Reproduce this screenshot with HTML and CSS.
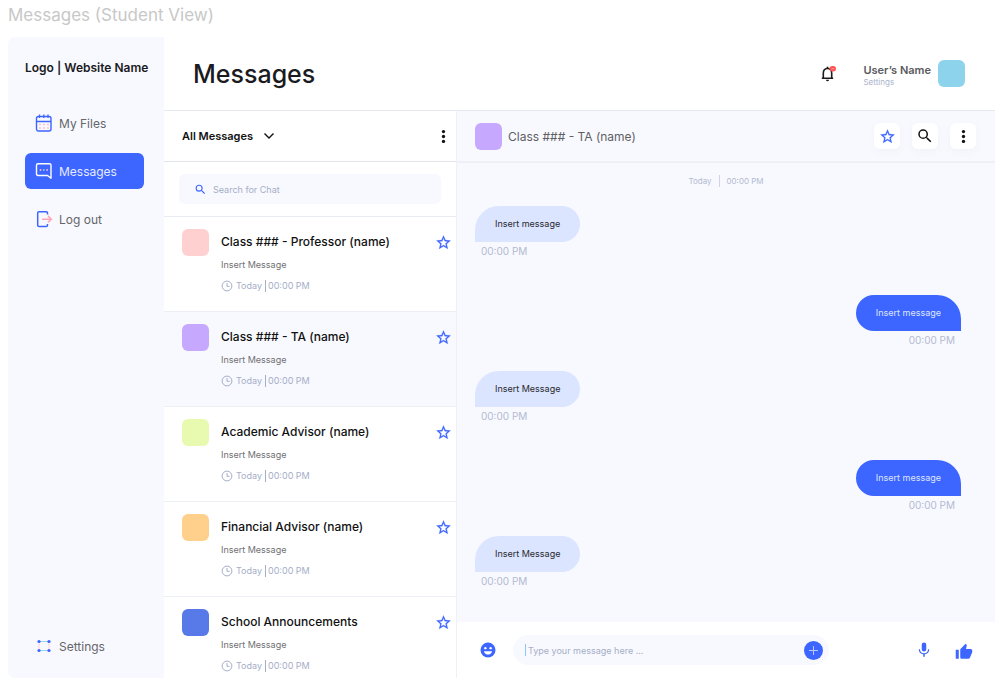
FILE: index.html
```html
<!DOCTYPE html>
<html lang="en">
<head>
<meta charset="utf-8">
<meta name="viewport" content="width=device-width, initial-scale=1">
<title>Messages (Student View)</title>
<link rel="stylesheet" href="styles.css">
</head>
<body>
<svg class="sprite" aria-hidden="true">
  <symbol id="star" viewBox="0 0 24 24"><path d="M22 9.24l-7.19-.62L12 2 9.19 8.63 2 9.24l5.46 4.73L5.82 21 12 17.27 18.18 21l-1.63-7.03L22 9.24zM12 15.4l-3.76 2.27 1-4.28-3.32-2.88 4.38-.38L12 6.1l1.71 4.04 4.38.38-3.32 2.88 1 4.28L12 15.4z" stroke="currentColor" stroke-width=".3"/></symbol>
  <symbol id="search" viewBox="0 0 24 24"><path d="M15.5 14h-.79l-.28-.27A6.47 6.47 0 0 0 16 9.5 6.5 6.5 0 1 0 9.5 16c1.61 0 3.09-.59 4.23-1.57l.27.28v.79l5 4.99L20.49 19l-4.99-5zm-6 0a4.5 4.5 0 1 1 0-9 4.5 4.5 0 0 1 0 9z"/></symbol>
  <symbol id="more" viewBox="0 0 24 24"><circle cx="12" cy="5" r="2.300"/><circle cx="12" cy="12" r="2.300"/><circle cx="12" cy="19" r="2.300"/></symbol>
  <symbol id="clock" viewBox="0 0 12 12"><g fill="none" stroke="currentColor"><circle cx="6" cy="6" r="4.9"/><path d="M6 3v3.3h2.6"/></g></symbol>
</svg>
<h2 class="caption">Messages (Student View)</h2>
<div class="app">
  <aside class="sidebar">
    <div class="logo">Logo | Website Name</div>
    <nav class="nav">
      <a class="nav-link" href="#files">
        <svg class="nav-icon" viewBox="0 0 18 18"><g fill="none"><rect x="1.500" y="2.500" width="14.500" height="14.500" rx="2" stroke="#3d65ff" stroke-width="1.400"/><path d="M1.500 7.500h14.500M4.500 .5v3.500M8.800 .5v3.500M13 .5v3.500" stroke="#3d65ff" stroke-width="1.300"/><path d="M4.200 10.500h10M4.200 14h10" stroke="#ffb3be" stroke-width="1.500" stroke-dasharray="1.500 2.500"/></g></svg>
        My Files
      </a>
      <a class="nav-link nav-link-active" href="#messages" aria-current="page">
        <svg class="nav-icon" viewBox="0 0 18 18"><path d="M3 1.800h11.500q1.500 0 1.500 1.500v13l-3.500-2.800H3q-1.500 0-1.500-1.500V3.300Q1.500 1.800 3 1.800z" fill="none" stroke="#fff" stroke-width="1.400" stroke-linejoin="round"/><circle cx="5.500" cy="8" r=".9" fill="#ffb3d4"/><circle cx="8.800" cy="8" r=".9" fill="#86ccff"/><circle cx="12.100" cy="8" r=".9" fill="#ffb3d4"/></svg>
        Messages
      </a>
      <a class="nav-link" href="#logout">
        <svg class="nav-icon" viewBox="0 0 18 18"><g fill="none"><path d="M12.500 4.500V3q0-1.300-1.300-1.300H4Q2.700 1.700 2.700 3v12.300q0 1.300 1.300 1.300h7.200q1.300 0 1.300-1.300V14" stroke="#3d65ff" stroke-width="1.500"/><path d="M7 9.200h9M13 5.900l3.300 3.300-3.300 3.300" stroke="#ffa6b5" stroke-width="1.500"/></g></svg>
        Log out
      </a>
      <a class="nav-link nav-link-last" href="#settings">
        <svg class="nav-icon" viewBox="0 0 18 18"><path d="M4 4.500h10M4 13.500h10" stroke="#9cd6f5"/><path d="M4 4.500v9M14 4.500v9" stroke="#ffd0d6"/><g fill="#3d65ff"><circle cx="4" cy="4.500" r="1.600"/><circle cx="14" cy="4.500" r="1.600"/><circle cx="4" cy="13.500" r="1.600"/><circle cx="14" cy="13.500" r="1.600"/></g></svg>
        Settings
      </a>
    </nav>
  </aside>
  <div class="main">
    <header class="topbar">
      <h1 class="title">Messages</h1>
      <button class="icon-button bell" type="button" aria-label="Notifications">
        <svg width="18" height="18" viewBox="0 0 18 18"><path d="M4.300 13V8.200Q4.300 4 8.500 3.300 12.700 4 12.700 8.200V13M2.800 13.300h11.400M8.500 1.800v2" fill="none" stroke="#1b1b1f" stroke-width="1.600"/><path d="M7 14.700h3q0 1.500-1.500 1.500T7 14.700z" fill="#1b1b1f"/><rect x="10.500" y="1" width="6.500" height="5.500" rx="2.700" fill="#ff5555"/><path d="M12.500 3.700h2.500" stroke="#ff9a9a"/></svg>
      </button>
      <div class="user">
        <div class="user-text"><strong class="user-name">User’s Name</strong><a class="user-settings" href="#settings">Settings</a></div>
        <div class="avatar sky"></div>
      </div>
    </header>
    <div class="columns">
      <section class="list">
        <div class="list-head">
          <button class="filter" type="button">All Messages
            <svg width="12" height="12" viewBox="0 0 12 12"><path d="M1.500 3.500L6 8l4.500-4.500" fill="none" stroke="#111" stroke-width="1.400"/></svg>
          </button>
          <button class="icon-button" type="button" aria-label="More"><svg width="17" height="17"><use href="#more"/></svg></button>
        </div>
        <div class="search-row">
          <label class="search"><svg class="blue" width="13" height="13"><use href="#search"/></svg><input class="field" type="search" placeholder="Search for Chat" aria-label="Search for Chat"></label>
        </div>
        <ul class="threads">
          <li class="thread">
            <div class="avatar pink"></div>
            <div class="thread-body"><h3 class="thread-name">Class ### - Professor (name)</h3><p class="thread-text">Insert Message</p><p class="thread-time"><svg width="12" height="12"><use href="#clock"/></svg><span>Today</span><span class="after-rule">00:00 PM</span></p></div>
            <button class="icon-button blue" type="button" aria-label="Star"><svg width="17" height="17"><use href="#star"/></svg></button>
          </li>
          <li class="thread thread-active">
            <div class="avatar purple"></div>
            <div class="thread-body"><h3 class="thread-name">Class ### - TA (name)</h3><p class="thread-text">Insert Message</p><p class="thread-time"><svg width="12" height="12"><use href="#clock"/></svg><span>Today</span><span class="after-rule">00:00 PM</span></p></div>
            <button class="icon-button blue" type="button" aria-label="Star"><svg width="17" height="17"><use href="#star"/></svg></button>
          </li>
          <li class="thread">
            <div class="avatar lime"></div>
            <div class="thread-body"><h3 class="thread-name">Academic Advisor (name)</h3><p class="thread-text">Insert Message</p><p class="thread-time"><svg width="12" height="12"><use href="#clock"/></svg><span>Today</span><span class="after-rule">00:00 PM</span></p></div>
            <button class="icon-button blue" type="button" aria-label="Star"><svg width="17" height="17"><use href="#star"/></svg></button>
          </li>
          <li class="thread">
            <div class="avatar orange"></div>
            <div class="thread-body"><h3 class="thread-name">Financial Advisor (name)</h3><p class="thread-text">Insert Message</p><p class="thread-time"><svg width="12" height="12"><use href="#clock"/></svg><span>Today</span><span class="after-rule">00:00 PM</span></p></div>
            <button class="icon-button blue" type="button" aria-label="Star"><svg width="17" height="17"><use href="#star"/></svg></button>
          </li>
          <li class="thread">
            <div class="avatar royal"></div>
            <div class="thread-body"><h3 class="thread-name">School Announcements</h3><p class="thread-text">Insert Message</p><p class="thread-time"><svg width="12" height="12"><use href="#clock"/></svg><span>Today</span><span class="after-rule">00:00 PM</span></p></div>
            <button class="icon-button blue" type="button" aria-label="Star"><svg width="17" height="17"><use href="#star"/></svg></button>
          </li>
        </ul>
      </section>
      <section class="chat">
        <div class="chat-head">
          <div class="avatar purple"></div>
          <h2 class="chat-name">Class ### - TA (name)</h2>
          <button class="tile blue" type="button" aria-label="Star"><svg width="17" height="17"><use href="#star"/></svg></button>
          <button class="tile" type="button" aria-label="Search"><svg width="18" height="18"><use href="#search"/></svg></button>
          <button class="tile" type="button" aria-label="More"><svg width="17" height="17"><use href="#more"/></svg></button>
        </div>
        <div class="messages">
          <p class="day"><span>Today</span><span class="day-rule"></span><span>00:00 PM</span></p>
          <div class="message"><p class="bubble">Insert message</p><time class="stamp">00:00 PM</time></div>
          <div class="message sent"><p class="bubble">Insert message</p><time class="stamp">00:00 PM</time></div>
          <div class="message"><p class="bubble">Insert Message</p><time class="stamp">00:00 PM</time></div>
          <div class="message sent"><p class="bubble">Insert message</p><time class="stamp">00:00 PM</time></div>
          <div class="message"><p class="bubble">Insert Message</p><time class="stamp">00:00 PM</time></div>
        </div>
        <form class="composer">
          <button class="icon-button blue" type="button" aria-label="Emoji"><svg width="18" height="18" viewBox="0 0 24 24"><circle cx="12" cy="12" r="10"/><g fill="#fff"><circle cx="8.500" cy="9.500" r="1.600"/><circle cx="15.500" cy="9.500" r="1.600"/><path d="M6.500 13.500h11q-1.500 4.500-5.500 4.500t-5.500-4.500z"/></g></svg></button>
          <div class="compose-box">
            <span class="caret"></span>
            <input class="field" type="text" placeholder="Type your message here ..." aria-label="Message">
            <button class="plus" type="button" aria-label="Attach"><svg width="9" height="9" viewBox="0 0 9 9"><path d="M4.500 0v9M0 4.500h9" stroke="#b9c8ff"/></svg></button>
          </div>
          <button class="icon-button blue" type="button" aria-label="Record"><svg width="18" height="18" viewBox="0 0 24 24"><path d="M12 14a3 3 0 0 0 3-3V5a3 3 0 0 0-6 0v6a3 3 0 0 0 3 3zm5.300-3a5.300 5.300 0 0 1-10.600 0H5a7 7 0 0 0 6 6.720V21h2v-3.280A7 7 0 0 0 19 11h-1.700z"/></svg></button>
          <button class="icon-button blue like" type="button" aria-label="Like"><svg width="18" height="18" viewBox="0 0 24 24"><path d="M1 21h4V9H1v12zm22-11a2 2 0 0 0-2-2h-6.310l.95-4.570.03-.32c0-.41-.17-.79-.44-1.060L14.170 1 7.590 7.590A2 2 0 0 0 7 9v10a2 2 0 0 0 2 2h9c.83 0 1.540-.5 1.840-1.220l3.020-7.050c.09-.23.14-.47.14-.73v-2z"/></svg></button>
        </form>
      </section>
    </div>
  </div>
</div>
</body>
</html>
```
FILE: styles.css
```css
* { box-sizing: border-box; }
body {
  margin: 0;
  min-height: 100vh;
  padding: 4px 5px 12px 8px;
  display: flex;
  flex-direction: column;
  background: #fff;
  color: #1b1b1f;
  font-family: Inter, "Liberation Sans", sans-serif;
}
h1, h2, h3, p, ul { margin: 0; padding: 0; font-weight: 400; }
ul { list-style: none; }
a { color: inherit; text-decoration: none; }
button { border: 0; padding: 0; background: none; color: #111; font: inherit; cursor: pointer; }
svg { display: block; fill: currentColor; flex: none; }
.sprite { position: absolute; width: 0; height: 0; }
.caption { color: #c8c8c8; font-size: 17px; line-height: 22px; margin-bottom: 11px; }
.app { flex: 1; display: flex; }

.sidebar {
  width: 156px;
  flex: none;
  display: flex;
  flex-direction: column;
  padding: 21px 20px 14px 17px;
  border-radius: 7px 0 0 7px;
  background: #f8f9fe;
}
.logo { font-size: 12px; font-weight: 600; line-height: 20px; white-space: nowrap; }
.nav { flex: 1; display: flex; flex-direction: column; gap: 12px; margin-top: 27px; }
.nav-link {
  display: flex;
  align-items: center;
  gap: 6px;
  height: 36px;
  padding-left: 10px;
  border-radius: 6px;
  color: #65656a;
  font-size: 12px;
}
.nav-link-active { background: #3d65ff; color: #e6ebff; }
.nav-link-last { margin-top: auto; }
.nav-icon { width: 18px; height: 18px; }

.main { flex: 1; min-width: 0; display: flex; flex-direction: column; }
.topbar {
  height: 74px;
  display: flex;
  align-items: center;
  padding: 0 30px 0 29px;
  border-bottom: 1px solid #e6e8f1;
}
.title { flex: 1; font-size: 25px; font-weight: 500; line-height: 30px; }
.bell { margin-right: 26px; }
.user { display: flex; align-items: center; gap: 7px; }
.user-text { display: flex; flex-direction: column; padding-top: 4px; }
.user-name { color: #5a5a5e; font-size: 11px; font-weight: 600; line-height: 13px; }
.user-settings { color: #aab2cc; font-size: 8px; line-height: 10px; }
.avatar { width: 27px; height: 27px; flex: none; border-radius: 6px; }
.sky { background: #8dd3ec; }
.pink { background: #ffd0d0; }
.purple { background: #c7a8ff; }
.lime { background: #e8fab0; }
.orange { background: #ffd08c; }
.royal { background: #577ae8; }
.icon-button { display: flex; align-items: center; justify-content: center; flex: none; }
.blue { color: #3d65ff; }

.columns { flex: 1; display: flex; }
.list { width: 293px; flex: none; border-right: 1px solid #f0f1f7; }
.list-head {
  height: 51px;
  display: flex;
  align-items: center;
  justify-content: space-between;
  padding: 0 4px 0 18px;
  border-bottom: 1px solid #e2e4ec;
}
.filter { display: flex; align-items: center; gap: 10px; font-size: 11px; font-weight: 600; }
.search-row { padding: 12px 15px; border-bottom: 1px solid #e9ebf2; }
.search { height: 30px; display: flex; align-items: center; gap: 6px; padding: 0 15px; border-radius: 6px; background: #f8f9fe; }
.field { flex: 1; min-width: 0; border: 0; padding: 0; outline: 0; background: none; color: #333; font: 9px Inter, "Liberation Sans", sans-serif; }
.field::placeholder { color: #a5aec8; }
.thread { height: 95px; display: flex; align-items: flex-start; padding: 12px 4px 0 18px; border-bottom: 1px solid #edeff5; }
.thread:last-child { height: auto; border-bottom: 0; }
.thread-active { background: #f8f9fe; }
.thread-body { flex: 1; margin-left: 12px; }
.thread .icon-button { margin-top: 5px; }
.thread-name { color: #111; font-size: 12px; font-weight: 500; line-height: 16px; margin-top: 5px; }
.thread-text { color: #707074; font-size: 9px; line-height: 12px; margin-top: 9px; }
.thread-time { display: flex; align-items: center; gap: 3px; margin-top: 9px; color: #a5aec8; font-size: 9px; line-height: 12px; }
.after-rule { border-left: 1px solid #a5aec8; padding-left: 2px; }

.chat { flex: 1; min-width: 0; display: flex; flex-direction: column; background: #f8f9fe; }
.chat-head {
  height: 52px;
  display: flex;
  align-items: center;
  gap: 12px;
  padding: 0 19px 0 18px;
  border-bottom: 2px solid #eff0f7;
}
.chat-name { flex: 1; margin-left: -6px; color: #5f5f63; font-size: 12px; }
.tile { width: 26px; height: 26px; display: flex; align-items: center; justify-content: center; border-radius: 6px; background: #fff; box-shadow: 0 3px 8px #5060a00a; }
.messages { flex: 1; padding: 11px 18px 16px; }
.day { display: flex; align-items: center; justify-content: center; gap: 7px; margin-bottom: 18px; color: #b3bad2; font-size: 8px; line-height: 14px; }
.day-rule { width: 1px; height: 12px; background: #cdd4e6; }
.message { display: flex; flex-direction: column; align-items: flex-start; margin-bottom: 37px; }
.bubble { padding: 12px 20px; border-radius: 24px 18px 18px 0; background: #dbe5ff; color: #29292f; font-size: 9px; line-height: 12px; }
.stamp { margin-top: 2px; padding: 0 6px; color: #b3bad2; font-size: 10px; line-height: 14px; }
.sent { align-items: flex-end; margin-right: 16px; margin-bottom: 24px; }
.sent .bubble { border-radius: 18px 24px 0 18px; background: #3d65ff; color: #dee5ff; }
.message:last-child { margin-bottom: 0; }
.composer { height: 56px; display: flex; align-items: center; padding: 0 22px; background: #fff; }
.compose-box { width: 316px; height: 30px; display: flex; align-items: center; margin: 0 auto 0 16px; padding: 0 6px 0 12px; border-radius: 15px; background: #f8f9fe; }
.caret { width: 1px; height: 12px; margin-right: 2px; background: #8cc8f5; }
.plus { width: 19px; height: 19px; display: flex; align-items: center; justify-content: center; border-radius: 50%; background: #3d65ff; }
.like { margin-left: 22px; padding-top: 3px; }
```
